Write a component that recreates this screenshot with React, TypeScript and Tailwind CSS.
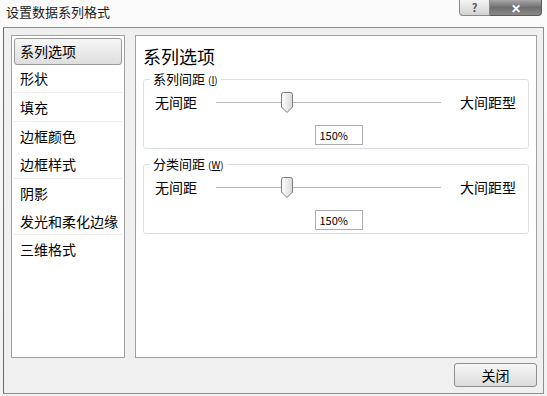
import React from 'react';

const FONT = '"Noto Sans CJK SC", "Microsoft YaHei", sans-serif';

const menuItems: { label: string; h: string; sep?: boolean }[] = [
  { label: '系列选项', h: 'h-[27px]' },
  { label: '形状', h: 'h-[28px]', sep: true },
  { label: '填充', h: 'h-[29px]', sep: true },
  { label: '边框颜色', h: 'h-[28px]' },
  { label: '边框样式', h: 'h-[29px]', sep: true },
  { label: '阴影', h: 'h-[29px]' },
  { label: '发光和柔化边缘', h: 'h-[27px]', sep: true },
  { label: '三维格式', h: 'h-[29px]' },
];

const Thumb: React.FC = () => (
  <svg width="12" height="21" viewBox="0 0 12 21" className="block">
    <defs>
      <linearGradient id="thumbGrad" x1="0" y1="0" x2="1" y2="0">
        <stop offset="0" stopColor="#ffffff" />
        <stop offset="1" stopColor="#d9d9d9" />
      </linearGradient>
    </defs>
    <path
      d="M2.5 0.5 H9.5 Q11.5 0.5 11.5 2.5 V15 L6 20.5 L0.5 15 V2.5 Q0.5 0.5 2.5 0.5 Z"
      fill="url(#thumbGrad)"
      stroke="#7a7a7a"
    />
  </svg>
);

interface GroupProps {
  title: string;
  accel: string;
  value: string;
}

const SpacingGroup: React.FC<GroupProps> = ({ title, accel, value }) => (
  <div className="relative h-[70px] rounded-[3px] border border-[#dcdfe2] bg-white">
    <div className="absolute -top-[10px] left-[6px] bg-white px-[3px] text-[13px] leading-[18px] text-black">
      {title}
      <span className="ml-[3px] text-[10px]">
        (<span className="underline">{accel}</span>)
      </span>
    </div>
    <div className="flex h-[45px] items-center pl-[11px] pr-[12px] text-[14px] text-black">
      <span className="w-[61px]">无间距</span>
      <div className="relative flex h-[21px] w-[225px] items-center">
        <div className="h-px w-full bg-[#b8b8b8]" />
        <div className="absolute left-[65px] top-0">
          <Thumb />
        </div>
      </div>
      <span className="ml-auto">大间距型</span>
    </div>
    <div className="flex justify-center pl-[5px]">
      <div className="flex h-[20px] w-[48px] items-center border border-[#abadb3] bg-white pl-[4px] text-[11px] text-black">
        {value}
      </div>
    </div>
  </div>
);

export default function App() {
  return (
    <div
      className="flex h-[396px] w-[547px] flex-col overflow-hidden bg-gradient-to-b from-[#fbfbfb] to-[#f2f2f2]"
      style={{ fontFamily: FONT }}
    >
      {/* title bar */}
      <div className="flex h-[27px] shrink-0 items-start">
        <div className="pl-[6px] pt-[3px] text-[13px] leading-[18px] text-[#1a1a1a]">设置数据系列格式</div>
        <div className="ml-auto mr-[5px] flex">
          <div className="flex h-[16px] w-[31px] items-center justify-center rounded-bl-[4px] border border-t-0 border-[#8a8a8a] bg-gradient-to-b from-[#f4f4f4] to-[#d2d2d2] text-[11px] font-bold leading-none text-[#555]">
            ?
          </div>
          <div className="flex h-[16px] w-[52px] items-center justify-center rounded-br-[4px] border border-l-0 border-t-0 border-[#5a5a5a] bg-gradient-to-b from-[#a8a8a8] via-[#6e6e6e] to-[#8a8a8a] text-[12px] font-bold leading-none text-white">
            ✕
          </div>
        </div>
      </div>

      {/* body */}
      <div className="ml-[3px] flex h-[367px] w-[541px] flex-col border border-[#8e8e8e] border-l-[#6a6a6a] bg-[#f0f0f0] pl-[7px] pr-[5px] pt-[7px]">
        <div className="flex h-[323px] gap-[10px]">
          {/* left menu */}
          <div className="w-[114px] border border-[#a0a0a0] bg-white px-[2px] pt-[2px]">
            {menuItems.map((item, i) => (
              <div
                key={item.label}
                className={
                  i === 0
                    ? 'flex h-[27px] items-center rounded-[3px] border border-[#9a9a9a] bg-gradient-to-b from-[#f7f7f7] to-[#dedede] pl-[5px] text-[14px] text-black'
                    : `flex ${item.h} items-center pl-[6px] text-[14px] text-black ${item.sep ? 'border-b border-[#ececec]' : ''}`
                }
              >
                {item.label}
              </div>
            ))}
          </div>

          {/* right panel */}
          <div className="w-[402px] border border-[#a0a0a0] bg-white px-[7px]">
            <div className="mt-[9px] h-[22px] text-[18px] leading-[22px] text-black">系列选项</div>
            <div className="mt-[12px]">
              <SpacingGroup title="系列间距" accel="I" value="150%" />
            </div>
            <div className="mt-[15px]">
              <SpacingGroup title="分类间距" accel="W" value="150%" />
            </div>
          </div>
        </div>

        <div className="mt-[5px] flex justify-end pr-[1px]">
          <button className="flex h-[24px] w-[83px] items-center justify-center rounded-[3px] border border-[#8f8f8f] bg-gradient-to-b from-[#f6f6f6] to-[#dcdcdc] text-[14px] text-black">
            关闭
          </button>
        </div>
      </div>
    </div>
  );
}
